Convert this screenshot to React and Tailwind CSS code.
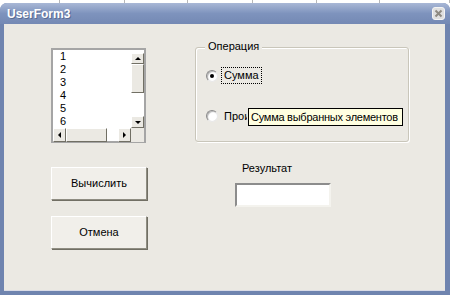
import React from "react";

const font = { fontFamily: '"Liberation Sans", Arial, sans-serif' };

function Raised({ className = "", children }) {
  return (
    <div
      className={`border border-t-white border-l-white border-r-[#716f64] border-b-[#716f64] bg-[#ebe9e3] flex items-center justify-center ${className}`}
    >
      {children}
    </div>
  );
}

function Arrow({ dir }) {
  const pts = {
    up: "1,4 4,1 7,4",
    down: "1,1 4,4 7,1",
    left: "4,0 1,3 4,6",
    right: "1,0 4,3 1,6",
  }[dir];
  const vertical = dir === "up" || dir === "down";
  return (
    <svg width={vertical ? 8 : 5} height={vertical ? 5 : 7} viewBox={vertical ? "0 0 8 5" : "0 0 5 7"}>
      <polygon points={pts} fill="#000" />
    </svg>
  );
}

function ListBox() {
  return (
    <div className="w-[95px] h-[95px] border-2 border-[#a5a5a5] bg-white grid grid-cols-[1fr_13px] grid-rows-[1fr_14px]">
      <div className="pl-[7px] text-[11px] leading-[13px] text-black">
        {[1, 2, 3, 4, 5, 6].map((n) => (
          <div key={n}>{n}</div>
        ))}
      </div>
      <div className="flex flex-col pt-[3px]">
        <Raised className="h-[11px]">
          <Arrow dir="up" />
        </Raised>
        <Raised className="h-[29px]" />
        <div className="flex-1" />
        <Raised className="h-[12px]">
          <Arrow dir="down" />
        </Raised>
      </div>
      <div className="flex">
        <Raised className="w-[13px]">
          <Arrow dir="left" />
        </Raised>
        <Raised className="w-[41px]" />
        <div className="flex-1" />
        <Raised className="w-[13px]">
          <Arrow dir="right" />
        </Raised>
      </div>
      <div className="bg-[#ebe9e3]" />
    </div>
  );
}

function Button({ label }) {
  return (
    <button className="w-[96px] h-[33px] bg-[#f1efea] border border-t-white border-l-white border-r-[#8f8d82] border-b-[#8f8d82] shadow-[1px_1px_0_#716f64] text-[11px] text-black">
      {label}
    </button>
  );
}

function Radio({ checked }) {
  return (
    <div className="w-[12px] h-[12px] rounded-full border border-t-[#8a8a8a] border-l-[#8a8a8a] border-r-[#e8e8e8] border-b-[#e8e8e8] bg-white shadow-[inset_1px_1px_1px_#b5b5b5] flex items-center justify-center">
      {checked && <div className="w-[4px] h-[4px] rounded-full bg-black" />}
    </div>
  );
}

export default function App() {
  const cells = [60, 65, 63, 65, 64, 63, 70];
  return (
    <div className="w-[450px] h-[295px] bg-white overflow-hidden" style={font}>
      <div className="flex h-[3px]">
        {cells.map((w, i) => (
          <div key={i} style={{ width: w }} className="shrink-0 border-r border-[#b8b8b8]" />
        ))}
      </div>

      <div className="h-[292px] rounded-t-[7px] bg-[#6f84af] flex flex-col">
        <div className="h-[21px] rounded-t-[7px] bg-gradient-to-b from-[#a9b8d6] via-[#7e93bd] to-[#7489b4] flex items-center justify-between pl-[7px] pr-[5px]">
          <span className="text-white font-bold text-[12px] [text-shadow:1px_1px_0_#5a6d94]">UserForm3</span>
          <div className="w-[13px] h-[13px] rounded-[3px] bg-[#e0e0e0] border border-[#f4f4f4] flex items-center justify-center">
            <svg width="9" height="9" viewBox="0 0 9 9">
              <path d="M1.5 1.5 L7.5 7.5 M7.5 1.5 L1.5 7.5" stroke="#8e8a82" strokeWidth="2" />
            </svg>
          </div>
        </div>

        <div className="flex-1 ml-[4px] mr-[5px] mb-[4px] bg-[#ebe9e3] border-b border-[#d9dbe6] flex pl-[47px] pt-[24px]">
          <div className="w-[96px] flex flex-col">
            <ListBox />
            <div className="mt-[24px]">
              <Button label="Вычислить" />
            </div>
            <div className="mt-[16px]">
              <Button label="Отмена" />
            </div>
          </div>

          <div className="ml-[48px] flex flex-col">
            <div className="relative mt-[-1px] w-[214px] h-[95px] border border-[#c9c6ba] rounded-[3px] shadow-[1px_1px_0_#ffffff,inset_1px_1px_0_#ffffff]">
              <span className="absolute left-[9px] top-[-8px] px-[3px] bg-[#ebe9e3] text-[11px] leading-[13px] text-black">
                Операция
              </span>

              <div className="flex items-center mt-[19px] ml-[10px]">
                <Radio checked />
                <span className="ml-[3px] px-[2px] h-[17px] flex items-center border border-dotted border-black text-[11px] text-black">
                  Сумма
                </span>
              </div>
              <div className="flex items-center mt-[24px] ml-[10px]">
                <Radio />
                <span className="ml-[4px] pl-[2px] w-[25px] overflow-hidden whitespace-nowrap text-[11px] text-black">
                  Произведение
                </span>
              </div>

              <div className="absolute left-[52px] top-[60px] w-[155px] h-[18px] bg-[#ffffe1] border border-black flex items-center pl-[2px] text-[11px] tracking-[-0.25px] text-black whitespace-nowrap">
                Сумма выбранных элементов
              </div>
            </div>

            <div className="mt-[20px] ml-[47px] text-[11px] leading-[13px] text-black">Результат</div>
            <div className="mt-[8px] ml-[40px] w-[96px] h-[24px] bg-white border-2 border-t-[#8c8c8c] border-l-[#8c8c8c] border-r-[#f4f3ee] border-b-[#f4f3ee]" />
          </div>
        </div>
      </div>
    </div>
  );
}
